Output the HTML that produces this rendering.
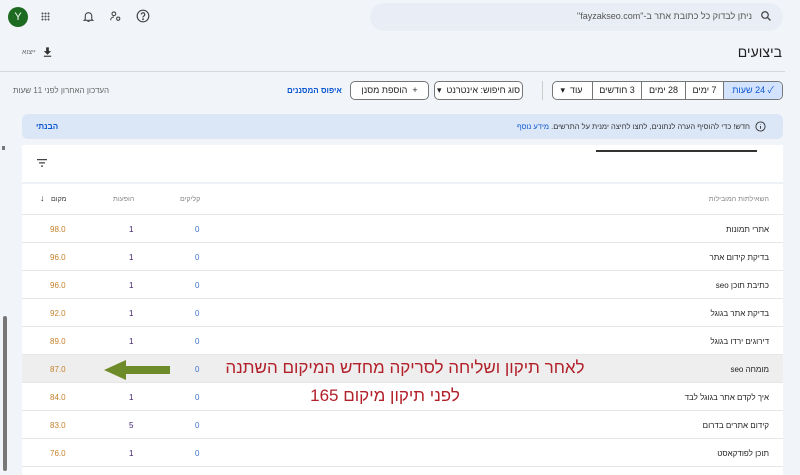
<!DOCTYPE html>
<html><head><meta charset="utf-8"><style>
*{margin:0;padding:0;box-sizing:border-box}
body{width:800px;height:471px;overflow:hidden;background:#f1f4f9;font-family:"Liberation Sans","Noto Sans CJK SC",sans-serif;position:relative;color:#1f1f1f}
.a{position:absolute}
.r{direction:rtl}
.chip{position:absolute;top:81px;height:19px;border:1px solid #747775;border-radius:5px;font-size:9px;line-height:17px;direction:rtl;text-align:center;background:#fff}
.seg{position:absolute;top:0;height:17px;border-left:1px solid #747775;font-size:9px;line-height:17px;text-align:center}
.row{position:absolute;left:22px;width:761px;height:28px;border-bottom:1px solid #e6e6e6;font-size:8px}
.row span{position:absolute;top:10px}
.q{right:14px;direction:rtl}
.p{left:28px;color:#c5802b}
.i{left:107px;color:#3c1d6b}
.c{left:173px;color:#3e74c9}
</style></head><body>
<div class="a" style="left:8px;top:7px;width:20px;height:20px;border-radius:50%;background:#1d6b21;color:#fff;font-size:11px;line-height:20px;text-align:center">Y</div>
<div class="a" style="left:41px;top:12px;width:9px;height:9px;background:radial-gradient(circle,#555 0.9px,transparent 1.1px) 0 0/3px 3px"></div>
<svg class="a" style="left:82px;top:10px" width="13" height="13" viewBox="0 0 24 24" fill="none" stroke="#444" stroke-width="2"><path d="M6 17V11a6 6 0 0 1 12 0v6l2 2H4z"/><path d="M10 21h4"/></svg>
<svg class="a" style="left:109px;top:10px" width="13" height="13" viewBox="0 0 24 24" fill="none" stroke="#444" stroke-width="2"><circle cx="9" cy="7" r="3.5"/><path d="M3 19c0-4 3-6 6-6"/><circle cx="17" cy="16" r="3"/></svg>
<svg class="a" style="left:136px;top:9px" width="14" height="14" viewBox="0 0 24 24" fill="none" stroke="#444" stroke-width="2"><circle cx="12" cy="12" r="10"/><path d="M9 9.5a3 3 0 1 1 4 2.8c-1 .4-1 1.2-1 2.2"/><circle cx="12" cy="17.5" r=".6" fill="#444"/></svg>
<div class="a" style="left:370px;top:3px;width:413px;height:28px;border-radius:14px;background:#e9eef6"></div>
<svg class="a" style="left:760px;top:10px" width="12" height="12" viewBox="0 0 24 24" fill="none" stroke="#444" stroke-width="2.5"><circle cx="10" cy="10" r="6.5"/><path d="M15 15l6 6"/></svg>
<div class="a r" style="right:48px;top:11px;font-size:9px;color:#555">ניתן לבדוק כל כתובת אתר ב-"fayzakseo.com"</div>
<div class="a r" style="right:18px;top:44px;font-size:14px;color:#222">ביצועים</div>
<svg class="a" style="left:42px;top:46px" width="11" height="12" viewBox="0 0 24 24" fill="#333"><path d="M9 2h6v8h5l-8 8-8-8h5z"/><rect x="4" y="20" width="16" height="2.5"/></svg>
<div class="a r" style="left:22px;top:49px;font-size:7px;color:#666">ייצוא</div>
<div class="a" style="left:0;top:71px;width:785px;height:1px;background:#d5d9de"></div>
<div class="chip" style="left:552px;width:231px;overflow:hidden">
<div class="seg" style="right:0;width:59px;background:#d3e3fd;border-left:1px solid #747775;color:#0b57d0">✓ 24 שעות</div>
<div class="seg" style="right:59px;width:38px">7 ימים</div>
<div class="seg" style="right:97px;width:44px">28 ימים</div>
<div class="seg" style="right:141px;width:49px">3 חודשים</div>
<div class="seg" style="right:190px;width:41px;border-left:none">עוד &nbsp;▾</div>
</div>
<div class="a" style="left:542px;top:81px;width:1px;height:19px;background:#ccc"></div>
<div class="chip" style="left:434px;width:89px">סוג חיפוש: אינטרנט &nbsp;▾</div>
<div class="chip" style="left:350px;width:79px">+ &nbsp;הוספת מסנן</div>
<div class="a r" style="left:287px;top:86px;font-size:8px;color:#0b57d0;font-weight:bold">איפוס המסננים</div>
<div class="a r" style="left:13px;top:86px;font-size:8px;color:#666">העדכון האחרון לפני 11 שעות</div>
<div class="a" style="left:22px;top:114px;width:761px;height:25px;border-radius:6px;background:#dbe6f7"></div>
<svg class="a" style="left:755px;top:121px" width="11" height="11" viewBox="0 0 24 24" fill="none" stroke="#333" stroke-width="2"><circle cx="12" cy="12" r="10"/><path d="M12 11v6M12 7v1"/></svg>
<div class="a r" style="right:50px;top:122px;font-size:7.5px;color:#333">חדש! כדי להוסיף הערה לנתונים, לחצו לחיצה ימנית על התרשים. <span style="color:#0b57d0">מידע נוסף</span></div>
<div class="a" style="left:36px;top:122px;font-size:8px;color:#0b57d0;font-weight:bold">הבנתי</div>
<div class="a" style="left:22px;top:145px;width:761px;height:330px;background:#fff"></div>
<div class="a" style="left:596px;top:150px;width:161px;height:2px;background:#333"></div>
<svg class="a" style="left:36px;top:158px" width="12" height="10" viewBox="0 0 24 20" fill="#444"><rect x="2" y="2" width="20" height="2.5"/><rect x="6" y="8.5" width="12" height="2.5"/><rect x="10" y="15" width="4" height="2.5"/></svg>
<div class="a" style="left:22px;top:182px;width:761px;height:2px;background:#eef1f5"></div>
<div class="row" style="top:184px;height:31px;color:#888">
<span class="q" style="top:12px;font-size:7px">השאילתות המובילות</span>
<span style="left:18px;top:9px;font-size:9px;color:#333">↓</span>
<span style="left:29px;top:12px;font-size:7px;color:#444">מקום</span>
<span style="left:91px;top:12px;font-size:7px">הופעות</span>
<span style="left:158px;top:12px;font-size:7px">קליקים</span>
</div>
<div class="row" style="top:215px"><span class="q">אתרי תמונות</span><span class="p">98.0</span><span class="i">1</span><span class="c">0</span></div>
<div class="row" style="top:243px"><span class="q">בדיקת קידום אתר</span><span class="p">96.0</span><span class="i">1</span><span class="c">0</span></div>
<div class="row" style="top:271px"><span class="q">כתיבת תוכן seo</span><span class="p">96.0</span><span class="i">1</span><span class="c">0</span></div>
<div class="row" style="top:299px"><span class="q">בדיקת אתר בגוגל</span><span class="p">92.0</span><span class="i">1</span><span class="c">0</span></div>
<div class="row" style="top:327px"><span class="q">דירוגים ירדו בגוגל</span><span class="p">89.0</span><span class="i">1</span><span class="c">0</span></div>
<div class="row" style="top:355px;background:#eeeeee"><span class="q">מומחה seo</span><span class="p">87.0</span><span class="c">0</span></div>
<div class="row" style="top:383px"><span class="q">איך לקדם אתר בגוגל לבד</span><span class="p">84.0</span><span class="i">1</span><span class="c">0</span></div>
<div class="row" style="top:411px"><span class="q">קידום אתרים בדרום</span><span class="p">83.0</span><span class="i">5</span><span class="c">0</span></div>
<div class="row" style="top:439px"><span class="q">תוכן לפודקאסט</span><span class="p">76.0</span><span class="i">1</span><span class="c">0</span></div>
<svg class="a" style="left:104px;top:360px" width="68" height="20" viewBox="0 0 68 20"><path d="M0 10L22 0V6H66V14H22V20Z" fill="#6e8b2a"/></svg>
<div class="a r" style="left:218px;top:358px;width:374px;text-align:center;font-size:17px;color:#b2202a;white-space:nowrap">לאחר תיקון ושליחה לסריקה מחדש המיקום השתנה</div>
<div class="a r" style="left:300px;top:386px;width:170px;text-align:center;font-size:17px;color:#b2202a;white-space:nowrap">לפני תיקון מיקום 165</div>
<div class="a" style="left:3px;top:316px;width:4px;height:155px;border-radius:2px;background:#777"></div>
<div class="a" style="left:2px;top:146px;width:3px;height:4px;background:#777"></div>
</body></html>
